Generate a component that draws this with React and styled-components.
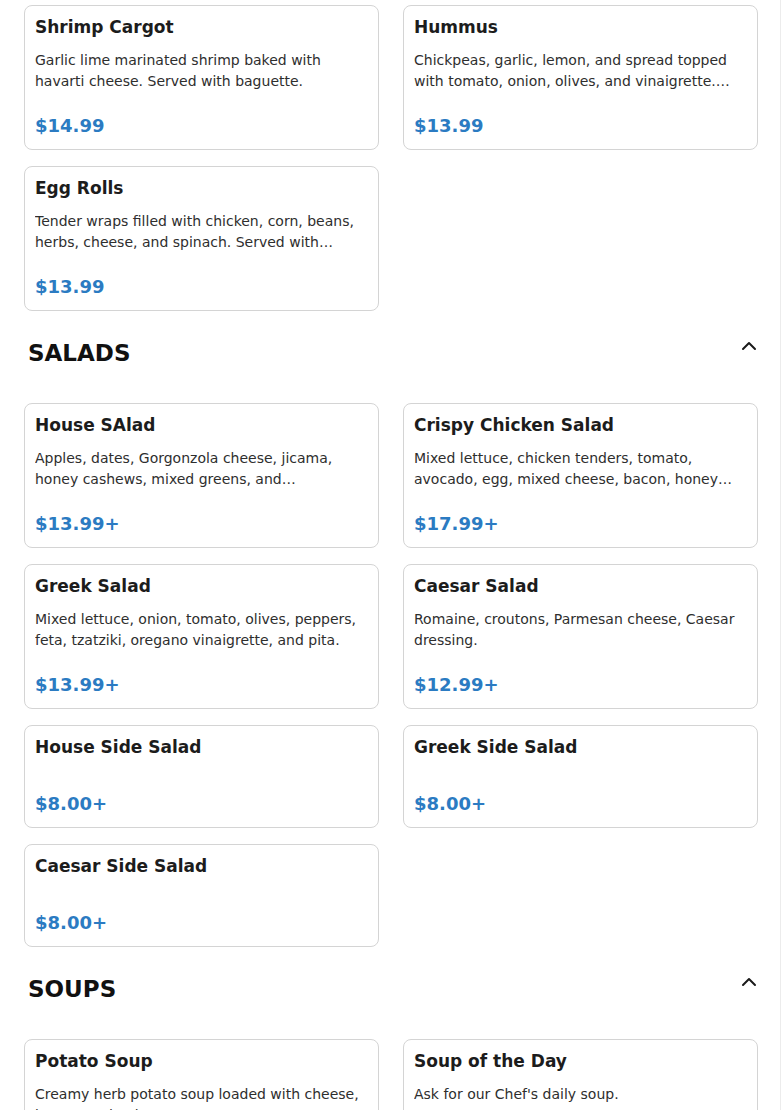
import React from 'react';
import styled, { createGlobalStyle } from 'styled-components';

const GlobalStyle = createGlobalStyle`
  html, body {
    margin: 0;
    padding: 0;
    background: #fff;
    font-family: "DejaVu Sans", "Liberation Sans", sans-serif;
  }
`

const Page = styled.div`
  width: 781px;
  box-sizing: border-box;
  padding: 5px 22px 0 24px;
  border-right: 1px solid #ececec;
  min-height: 1110px;
`

const Section = styled.section`
  & + & {
    margin-top: 23px;
  }
`

const Header = styled.div`
  display: flex;
  justify-content: space-between;
  align-items: flex-start;
  padding-left: 4px;
  margin-bottom: 36px;
`

const SectionTitle = styled.h2`
  margin: 0;
  padding-top: 5px;
  font-size: 23px;
  line-height: 28px;
  font-weight: 700;
  color: #111;
`

const Toggle = styled.button`
  width: 24px;
  height: 24px;
  padding: 0;
  margin-right: -3px;
  border: none;
  background: transparent;
  color: #1a1a1a;
  display: flex;
  align-items: center;
  justify-content: center;
`

const Grid = styled.div`
  display: grid;
  grid-template-columns: 1fr 1fr;
  column-gap: 24px;
  row-gap: 16px;
`

const Card = styled.div`
  border: 1px solid #d4d4d4;
  border-radius: 8px;
  padding: 11px 10px 10px;
  background: #fff;
`

const Name = styled.h3`
  margin: 0;
  font-size: 17px;
  line-height: 21px;
  font-weight: 700;
  color: #1c1c1c;
`

const Desc = styled.p`
  margin: 12px 0 0;
  font-size: 14px;
  line-height: 21px;
  color: #2e2e2e;
  display: -webkit-box;
  -webkit-line-clamp: 2;
  -webkit-box-orient: vertical;
  overflow: hidden;
`

const Price = styled.div`
  margin-top: 21px;
  font-size: 18px;
  line-height: 26px;
  font-weight: 700;
  color: #2b7bc2;
`

const Chevron = () => (
  <svg width="24" height="24" viewBox="0 0 24 24" fill="none" stroke="currentColor"
    strokeWidth="2" strokeLinecap="round" strokeLinejoin="round">
    <polyline points="6 15 12 9 18 15" />
  </svg>
)

const sections = [
  {
    items: [
      { name: 'Shrimp Cargot', desc: 'Garlic lime marinated shrimp baked with havarti cheese. Served with baguette.', price: '$14.99' },
      { name: 'Hummus', desc: 'Chickpeas, garlic, lemon, and spread topped with tomato, onion, olives, and vinaigrette. Served with pita bread.', price: '$13.99' },
      { name: 'Egg Rolls', desc: 'Tender wraps filled with chicken, corn, beans, herbs, cheese, and spinach. Served with guacamole and salsa.', price: '$13.99' },
    ],
  },
  {
    title: 'SALADS',
    items: [
      { name: 'House SAlad', desc: 'Apples, dates, Gorgonzola cheese, jicama, honey cashews, mixed greens, and strawberries with balsamic dressing.', price: '$13.99+' },
      { name: 'Crispy Chicken Salad', desc: 'Mixed lettuce, chicken tenders, tomato, avocado, egg, mixed cheese, bacon, honey mustard.', price: '$17.99+' },
      { name: 'Greek Salad', desc: 'Mixed lettuce, onion, tomato, olives, peppers, feta, tzatziki, oregano vinaigrette, and pita.', price: '$13.99+' },
      { name: 'Caesar Salad', desc: 'Romaine, croutons, Parmesan cheese, Caesar dressing.', price: '$12.99+' },
      { name: 'House Side Salad', price: '$8.00+' },
      { name: 'Greek Side Salad', price: '$8.00+' },
      { name: 'Caesar Side Salad', price: '$8.00+' },
    ],
  },
  {
    title: 'SOUPS',
    items: [
      { name: 'Potato Soup', desc: 'Creamy herb potato soup loaded with cheese, bacon, and onion.', price: '$6.99+' },
      { name: 'Soup of the Day', desc: "Ask for our Chef's daily soup.", price: '$6.99+' },
    ],
  },
]

const MenuCard = ({ item }) => (
  <Card>
    <Name>{item.name}</Name>
    <Desc>{item.desc}</Desc>
    <Price>{item.price}</Price>
  </Card>
)

const App = () => {
  return (
    <Page>
      <GlobalStyle />
      {sections.map((section, i) => (
        <Section key={i}>
          {section.title && (
            <Header>
              <SectionTitle>{section.title}</SectionTitle>
              <Toggle aria-label="collapse"><Chevron /></Toggle>
            </Header>
          )}
          <Grid>
            {section.items.map((item) => (
              <MenuCard key={item.name} item={item} />
            ))}
          </Grid>
        </Section>
      ))}
    </Page>
  )
}

export default App
